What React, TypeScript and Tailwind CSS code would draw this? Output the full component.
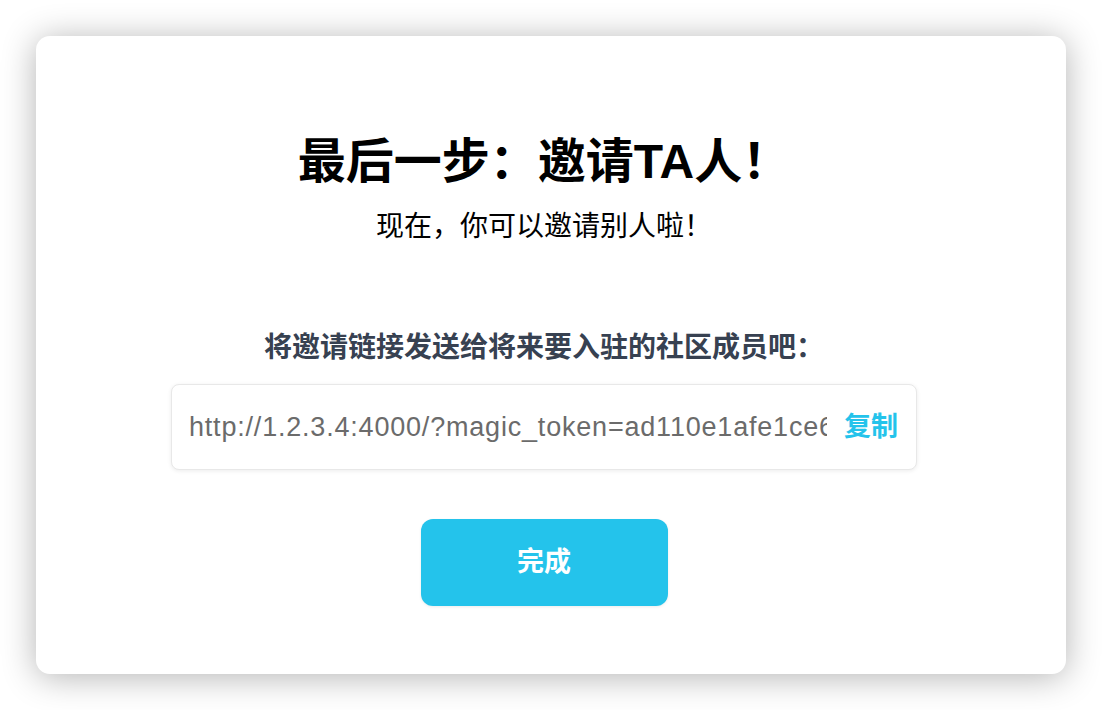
const inviteLink =
  'http://1.2.3.4:4000/?magic_token=ad110e1afe1ce6f3b2a9c0d7e41f85b6';

export default function App() {
  return (
    <div className="flex h-[710px] w-full bg-white p-[36px] font-['Liberation_Sans','Noto_Sans_CJK_SC',sans-serif]">
      <div className="flex flex-1 flex-col items-center rounded-[14px] bg-white pr-[14px] pt-[98px] shadow-[0_3px_34px_rgba(0,0,0,0.3)]">
        {/* heading */}
        <h1 className="h-[56px] text-[48px] font-bold leading-[56px] text-black">
          最后一步：邀请TA人！
        </h1>
        <p className="mt-[17px] h-[40px] text-[28px] leading-[40px] text-black">
          现在，你可以邀请别人啦！
        </p>

        {/* invite link */}
        <p className="mt-[81px] h-[40px] text-[28px] font-bold leading-[40px] text-[#374151]">
          将邀请链接发送给将来要入驻的社区成员吧：
        </p>
        <div className="mt-4 flex h-[86px] w-[746px] items-center gap-[17px] rounded-lg border border-[#e8e8e8] bg-white pl-[17px] pr-[18px] shadow-[0_1px_4px_rgba(0,0,0,0.08)]">
          <div className="flex-1 overflow-hidden whitespace-nowrap text-[27px] tracking-[0.8px] text-[#6b6b6b]">
            {inviteLink}
          </div>
          <button className="text-[27px] font-bold text-[#24c3eb]">复制</button>
        </div>

        {/* done */}
        <button className="mt-[49px] h-[87px] w-[247px] rounded-xl bg-[#24c3eb] text-[27px] font-bold text-white shadow-[0_1px_3px_rgba(0,0,0,0.08)]">
          完成
        </button>
      </div>
    </div>
  );
}
